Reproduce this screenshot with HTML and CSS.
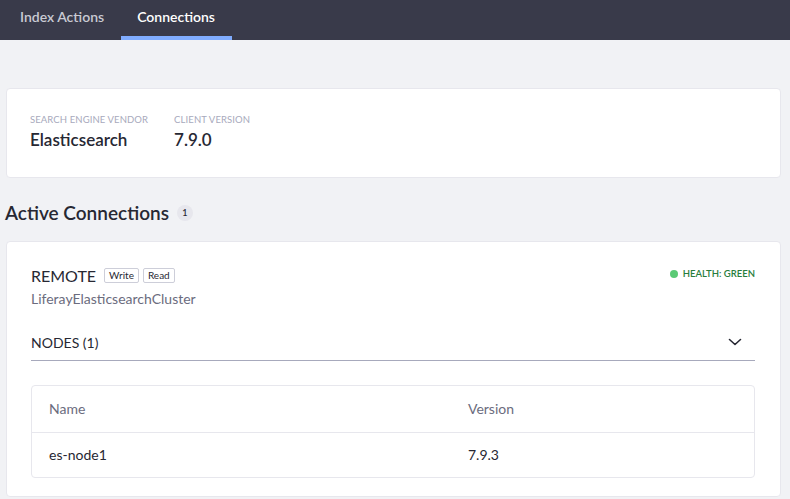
FILE: index.html
```html
<!DOCTYPE html>
<html>
<head>
<meta charset="utf-8">
<link rel="stylesheet" href="styles.css">
</head>
<body>
<nav class="navbar">
  <a class="tab">Index Actions</a>
  <a class="tab active">Connections</a>
</nav>
<main class="content">
  <section class="card info-card">
    <div class="info-item">
      <div class="info-label">Search Engine Vendor</div>
      <div class="info-value">Elasticsearch</div>
    </div>
    <div class="info-item">
      <div class="info-label">Client Version</div>
      <div class="info-value">7.9.0</div>
    </div>
  </section>
  <h2 class="section-title">Active Connections <span class="count-badge">1</span></h2>
  <section class="card conn-card">
    <div class="conn-head">
      <div class="conn-id">
        <div class="conn-title-row">
          <span class="conn-title">REMOTE</span>
          <span class="tag">Write</span>
          <span class="tag">Read</span>
        </div>
        <div class="conn-cluster">LiferayElasticsearchCluster</div>
      </div>
      <div class="health"><span class="dot"></span>HEALTH: GREEN</div>
    </div>
    <div class="nodes-toggle">
      <span>NODES (1)</span>
      <svg class="chev" width="14" height="14" viewBox="0 0 14 14"><path d="M1.5 4.5 L7 9.5 L12.5 4.5" fill="none" stroke="#272833" stroke-width="1.6" stroke-linecap="round" stroke-linejoin="round"/></svg>
    </div>
    <div class="table-wrap">
      <table class="nodes-table">
        <thead>
          <tr><th class="col-name">Name</th><th>Version</th></tr>
        </thead>
        <tbody>
          <tr><td>es-node1</td><td>7.9.3</td></tr>
        </tbody>
      </table>
    </div>
  </section>
</main>
</body>
</html>
```
FILE: styles.css
```css
* { box-sizing: border-box; }
html, body { margin: 0; padding: 0; }
body {
  background: #f1f2f5;
  font-family: Lato, "Noto Sans", sans-serif;
  color: #272833;
  overflow: hidden;
}
.navbar {
  height: 40px;
  background: #393a4a;
  display: flex;
  padding-left: 4px;
}
.tab {
  display: flex;
  align-items: center;
  padding: 0 16px 8px;
  color: #c9cad3;
  font-size: 14px;
  font-weight: 600;
  border-bottom: 4px solid transparent;
  height: 40px;
  padding-top: 4px;
}
.tab.active {
  color: #ffffff;
  border-bottom-color: #80acff;
  margin-left: 1px;
  padding-right: 17px;
}
.content {
  padding: 48px 9px 0 6px;
}
.card {
  background: #fff;
  border: 1px solid #e7e7ed;
  border-radius: 4px;
}
.info-card {
  height: 90px;
  display: flex;
  gap: 26px;
  padding: 25px 23px;
}
.info-label {
  font-size: 9.5px;
  text-transform: uppercase;
  color: #a7a9bc;
  line-height: 12px;
  letter-spacing: 0.1px;
}
.info-value {
  font-size: 17px;
  font-weight: 600;
  margin-top: 4px;
  line-height: 20px;
}
.section-title {
  margin: 22px 0 0 -1px;
  font-size: 19px;
  font-weight: 600;
  height: 26px;
  line-height: 26px;
  display: flex;
  align-items: center;
  gap: 8px;
}
.count-badge {
  width: 16px;
  height: 16px;
  border-radius: 50%;
  background: #e7e7ed;
  font-size: 9px;
  font-weight: 600;
  color: #272833;
  display: inline-flex;
  align-items: center;
  justify-content: center;
}
.conn-card {
  margin-top: 15px;
  padding: 23px 25px 18px 24px;
}
.conn-head {
  display: flex;
  justify-content: space-between;
  align-items: flex-start;
}
.conn-title-row {
  display: flex;
  align-items: center;
  gap: 4px;
  height: 20px;
}
.conn-title {
  font-size: 16px;
  margin-right: 4px;
}
.tag {
  font-size: 10px;
  border: 1px solid #cdced9;
  border-radius: 2px;
  padding: 0 4px;
  line-height: 13px;
  color: #272833;
}
.conn-cluster {
  font-size: 14px;
  color: #6b6c7e;
  margin-top: 5px;
  line-height: 18px;
}
.health {
  display: flex;
  align-items: center;
  gap: 5px;
  font-size: 9.5px;
  font-weight: 600;
  color: #287d3c;
  margin-top: 3px;
}
.dot {
  width: 8px;
  height: 8px;
  border-radius: 50%;
  background: #5aca75;
}
.nodes-toggle {
  margin-top: 19px;
  display: flex;
  justify-content: space-between;
  align-items: center;
  height: 34px;
  border-bottom: 1px solid #a7a9bc;
  font-size: 14px;
  padding: 0 13px 3px 0;
}
.table-wrap {
  margin-top: 24px;
  border: 1px solid #e7e7ed;
  border-radius: 4px;
  overflow: hidden;
}
.nodes-table {
  width: 100%;
  border-collapse: collapse;
  font-size: 14px;
}
.nodes-table th {
  text-align: left;
  font-weight: 400;
  color: #6b6c7e;
  height: 46px;
  padding: 0 17px;
  border-bottom: 1px solid #e7e7ed;
}
.nodes-table th.col-name { width: 419px; }
.nodes-table td {
  height: 45px;
  padding: 0 17px;
  color: #272833;
}
```
